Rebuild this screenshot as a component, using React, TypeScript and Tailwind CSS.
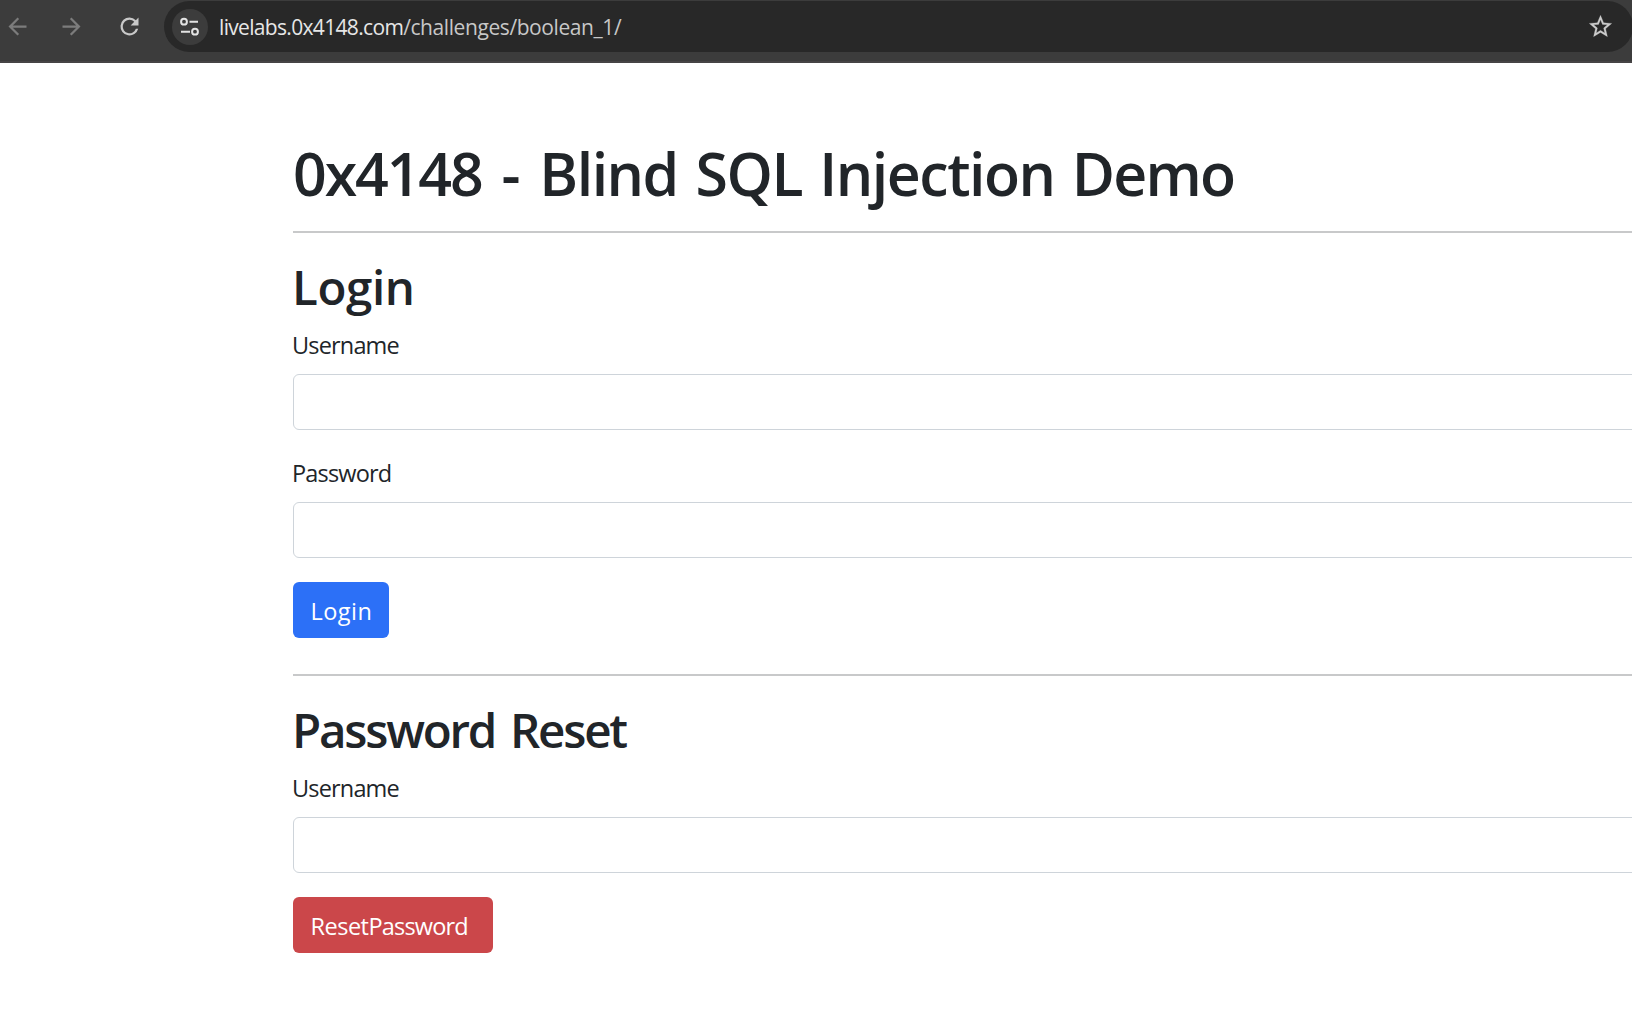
import React from 'react';

function ArrowIcon({ className }: { className: string }) {
  return (
    <svg viewBox="0 0 24 24" className={className} fill="currentColor" aria-hidden="true">
      <path d="M20 11H7.83l5.59-5.59L12 4l-8 8 8 8 1.41-1.41L7.83 13H20v-2z" />
    </svg>
  );
}

function ReloadIcon() {
  return (
    <svg viewBox="0 0 24 24" className="ml-[31.5px] size-[27px] shrink-0 text-[#c9c9c9]" fill="currentColor" aria-hidden="true">
      <path d="M17.65 6.35A7.96 7.96 0 0 0 12 4a8 8 0 1 0 7.73 10h-2.08A6 6 0 1 1 12 6c1.66 0 3.14.69 4.22 1.78L13 11h7V4l-2.35 2.35z" />
    </svg>
  );
}

function SiteSettingsIcon() {
  return (
    <svg viewBox="0 0 36 36" className="size-9" fill="none" stroke="currentColor" strokeWidth="2" aria-hidden="true">
      <circle cx="12" cy="12.7" r="2.9" />
      <path d="M17.5 12.7h8.5M9 22.7h9" />
      <circle cx="23" cy="22.7" r="2.9" />
    </svg>
  );
}

function StarIcon() {
  return (
    <svg viewBox="0 0 24 24" className="mr-[19.5px] size-[27px] shrink-0 text-[#cbcbcb]" fill="currentColor" stroke="currentColor" strokeWidth="0.2" aria-hidden="true">
      <path d="M22 9.24l-7.19-.62L12 2 9.19 8.63 2 9.24l5.46 4.73L5.82 21 12 17.27 18.18 21l-1.63-7.03L22 9.24zM12 15.4l-3.76 2.27 1-4.28-3.32-2.88 4.38-.38L12 6.1l1.71 4.04 4.38.38-3.32 2.88 1 4.28L12 15.4z" />
    </svg>
  );
}

function BrowserBar() {
  return (
    <header className="flex h-[63px] items-start border-b-2 border-[#464445] bg-[#3c3c3c]">
      <div className="flex h-[53px] w-[164px] shrink-0 items-center pl-[3.5px]">
        <ArrowIcon className="size-[27px] shrink-0 text-[#7c7c7c]" />
        <ArrowIcon className="ml-[27px] size-[27px] shrink-0 rotate-180 text-[#7c7c7c]" />
        <ReloadIcon />
      </div>
      <div className="-mr-px mt-px flex h-[51px] grow items-center rounded-full bg-[#282828] pl-2">
        <span className="flex size-9 shrink-0 items-center justify-center rounded-full bg-[#3c3c3c] text-[#e3e3e3]">
          <SiteSettingsIcon />
        </span>
        <p className="ml-[11px] grow whitespace-nowrap text-[21px] leading-7 text-[#c7c7c7]">
          <span className="tracking-[-0.67px] text-[#e6e6e6]">livelabs.0x4148.com</span>
          <span className="tracking-[-0.416px]">/challenges/boolean_1/</span>
        </p>
        <StarIcon />
      </div>
    </header>
  );
}

function Field({ id, label, type = 'text' }: { id: string; label: string; type?: string }) {
  return (
    <div className="flex flex-col gap-[11px]">
      <label htmlFor={id} className="-ml-px text-[23.5px] leading-9 tracking-[-0.83px]">
        {label}
      </label>
      <input id={id} type={type} className="h-14 w-full rounded-md border border-[#ced4da] bg-white px-[18px]" />
    </div>
  );
}

function Rule() {
  return <hr className="h-0.5 border-0 bg-[#c8c9ca]" />;
}

export default function App() {
  return (
    <div className="h-[1017px] w-[1632px] overflow-hidden bg-white font-['Open_Sans',sans-serif] text-[#212529]">
      <BrowserBar />
      <main className="-mr-10 ml-[293px] pt-[74px]">
        <h1 className="mb-[22px] whitespace-nowrap text-[59px] font-semibold leading-[72px]">
          <span className="tracking-[-2.09px]">0x4148</span>
          <span className="tracking-[4.5px]"> </span>-<span className="tracking-[3.5px]"> </span>
          <span className="tracking-[-1.5px]">Blind</span>
          <span className="tracking-[2.4px]"> </span>
          <span className="tracking-[-1.52px]">SQL</span>
          <span className="tracking-[2px]"> </span>
          <span className="tracking-[-1.46px]">Injection</span>
          <span className="tracking-[1.8px]"> </span>
          <span className="tracking-[-1.73px]">Demo</span>
        </h1>
        <Rule />
        <form className="mb-9 mt-[25px]">
          <h2 className="-ml-px mb-[11px] text-[47.5px] font-semibold leading-[58px] tracking-[-0.41px]">Login</h2>
          <Field id="username" label="Username" />
          <div className="mt-[25px]">
            <Field id="password" label="Password" type="password" />
          </div>
          <button type="button" className="mt-6 flex h-14 w-24 items-center rounded-md bg-[#2c70f7] pl-[17.5px] pt-0.5 text-[23.5px] leading-9 tracking-[0.476px] text-white">
            Login
          </button>
        </form>
        <Rule />
        <form className="mt-[25px]">
          <h2 className="-ml-px mb-[11px] text-[47.5px] font-semibold leading-[58px] tracking-[-2.2px]">
            Password<span className="tracking-[2.4px]"> </span>Reset
          </h2>
          <Field id="reset-username" label="Username" />
          <button type="button" className="mt-6 flex h-14 w-[200px] items-center whitespace-pre rounded-md bg-[#cb474a] pl-[17.5px] pt-0.5 text-[23.5px] leading-9 text-white">
            <span className="tracking-[-0.5px]">Reset</span> <span className="tracking-[-0.82px]">Password</span>
          </button>
        </form>
      </main>
    </div>
  );
}
